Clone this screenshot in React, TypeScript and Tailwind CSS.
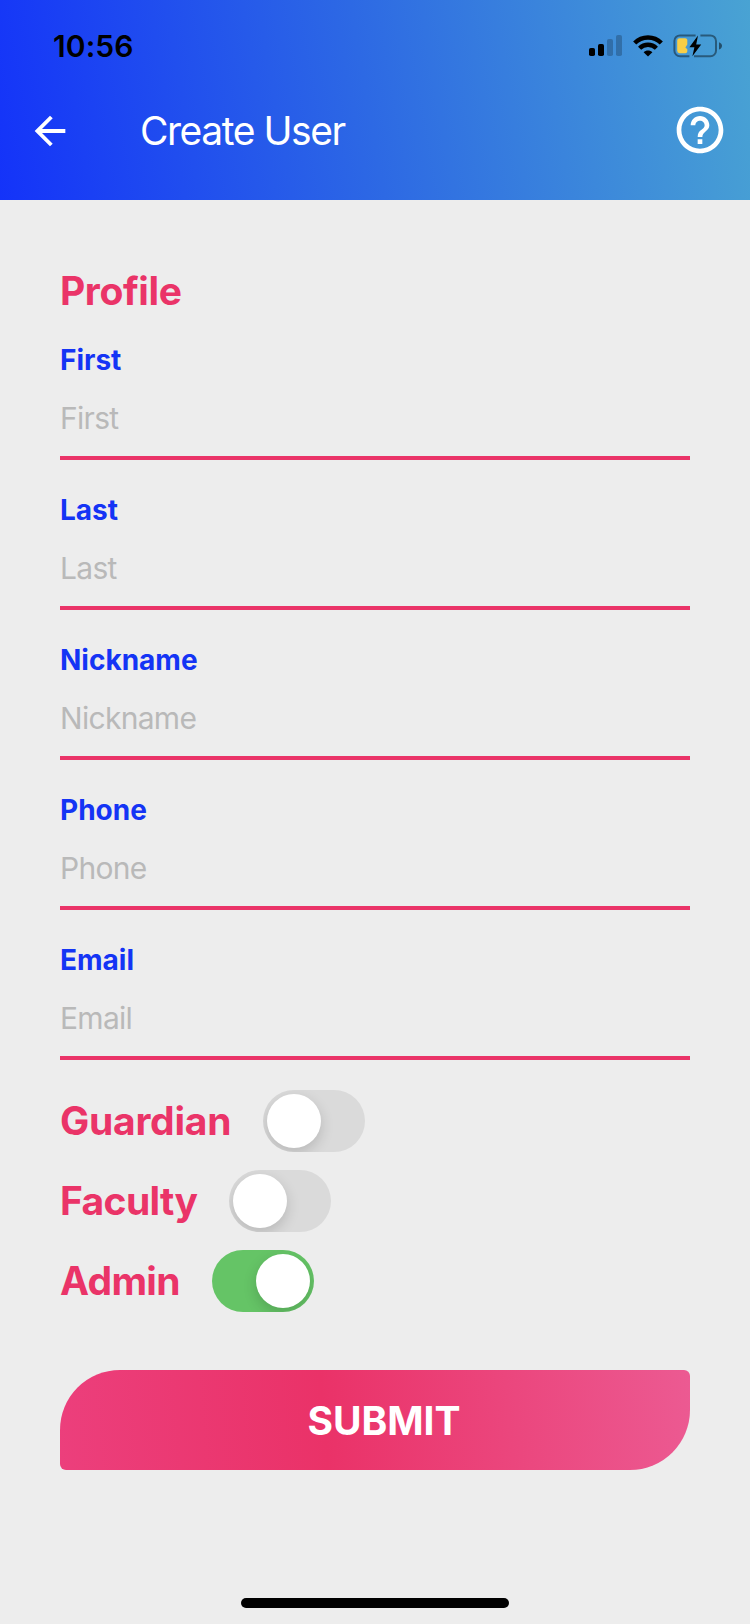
import { useState } from "react";
import { MdArrowBack, MdHelpOutline } from "react-icons/md";

const fields = ["First", "Last", "Nickname", "Phone", "Email"];

function SignalIcon() {
  return (
    <svg width="34" height="22" viewBox="0 0 34 22">
      <rect x="0" y="13" width="6" height="8" rx="1.8" />
      <rect x="9" y="9" width="6" height="12" rx="1.8" />
      <rect x="18" y="4" width="6" height="17" rx="1.8" opacity="0.22" />
      <rect x="27" y="0" width="6" height="21" rx="1.8" opacity="0.22" />
    </svg>
  );
}

function WifiIcon() {
  return (
    <svg width="30" height="22" viewBox="0 0 30 22" fill="none" stroke="#000" strokeWidth="4.4">
      <path d="M1.7 8C9 .6 21 .6 28.3 8" />
      <path d="M6.6 13.2C11.3 8.5 18.7 8.5 23.4 13.2" />
      <path d="M15 21.6L10.6 17.2C13 15 17 15 19.4 17.2Z" fill="#000" stroke="none" />
    </svg>
  );
}

function BatteryIcon() {
  return (
    <svg width="50" height="24" viewBox="0 0 50 24" fill="none">
      <path d="M16.4 22.3H7a5.6 5.6 0 0 1-5.6-5.6V7A5.6 5.6 0 0 1 7 1.4H22.6M27.4 1.4H37.4A5.6 5.6 0 0 1 43 7V16.7A5.6 5.6 0 0 1 37.4 22.3H21" stroke="#000" strokeOpacity="0.42" strokeWidth="2" />
      <path d="M46 8.2C50 9.6 50 14 46 15.6Z" fill="#000" fillOpacity="0.5" />
      <path d="M6.6 4.2H12.4A2.2 2.2 0 0 1 14.3 5.8V10.4L12.4 13.6L14.3 15.2V17.4A2.2 2.2 0 0 1 12.4 19.2H6.6A2.4 2.4 0 0 1 4.2 16.8V6.6A2.4 2.4 0 0 1 6.6 4.2Z" fill="#f8ce46" />
      <path d="M25 1.6L16.4 13.2H21.4L19.4 22.2L28.2 10.4H23.2Z" fill="#000" />
    </svg>
  );
}

function Toggle({ label, initial, tracking }: { label: string; initial: boolean; tracking: string }) {
  const [on, setOn] = useState(initial);
  return (
    <div className="flex h-20 items-center">
      <span className={`pb-[2px] text-[39px] font-bold leading-none text-[#ea3468] ${tracking}`}>{label}</span>
      <button
        role="switch"
        aria-checked={on}
        aria-label={label}
        onClick={() => setOn(!on)}
        className={`ml-8 flex h-[62px] w-[102px] items-center overflow-hidden rounded-full p-1 ${on ? "justify-end bg-[#65c466]" : "justify-start bg-[#dadada]"}`}
      >
        <span className="size-[54px] rounded-full bg-white shadow-[0_5px_14px_rgba(0,0,0,0.16)]" />
      </button>
    </div>
  );
}

export default function App() {
  return (
    <div className="flex h-[1624px] w-[750px] flex-col bg-[#ededed] font-['Inter',sans-serif]">
      <header className="h-[200px] bg-[linear-gradient(80deg,#1433f9_0%,#2d69e4_49%,#49a3d3_100%)]">
        <div className="flex h-[91px] items-center justify-between pl-[53px] pr-[27px]">
          <span className="text-[30px] font-semibold leading-none tracking-[0.1px]">10:56</span>
          <div className="flex items-center gap-[10px]">
            <SignalIcon />
            <WifiIcon />
            <BatteryIcon />
          </div>
        </div>
        <div className="flex h-[79px] items-center pl-[27px] pr-[22px] text-white">
          <MdArrowBack size={46} />
          <h1 className="ml-[67px] flex-1 text-[39px] leading-none tracking-[-1.45px]">Create User</h1>
          <MdHelpOutline size={56} className="mb-[2px]" />
        </div>
      </header>

      <main className="flex flex-1 flex-col px-[60px] pt-[61px]">
        <h2 className="mb-px flex h-[58px] items-center text-[39px] font-bold leading-none tracking-[-0.4px] text-[#ea3468]">Profile</h2>
        <div className="flex flex-col gap-[10px]">
          {fields.map((name) => (
            <label key={name} className="flex h-[140px] flex-col border-b-4 border-[#ea3468] pt-5">
              <span className="flex h-10 items-center text-[28px] font-bold leading-none text-[#1434f5]">{name}</span>
              <input
                placeholder={name}
                className="h-[76px] w-full bg-transparent text-[30px] tracking-[-0.7px] outline-none placeholder:text-[#b9b9b9]"
              />
            </label>
          ))}
        </div>
        <div className="mt-[21px]">
          <Toggle label="Guardian" initial={false} tracking="tracking-[-0.25px]" />
          <Toggle label="Faculty" initial={false} tracking="tracking-[-0.65px]" />
          <Toggle label="Admin" initial={true} tracking="tracking-[-0.7px]" />
        </div>
        <button className="mt-[49px] h-[100px] shrink-0 rounded-[6px] rounded-tl-[60px] rounded-br-[60px] bg-[linear-gradient(85deg,#ec3f7c_0%,#ea3268_42%,#ec5a92_100%)] pl-[18px] text-[39px] font-bold leading-none text-white">
          SUBMIT
        </button>
      </main>

      <div className="mx-auto mb-4 h-[10px] w-[268px] rounded-full bg-black" />
    </div>
  );
}
